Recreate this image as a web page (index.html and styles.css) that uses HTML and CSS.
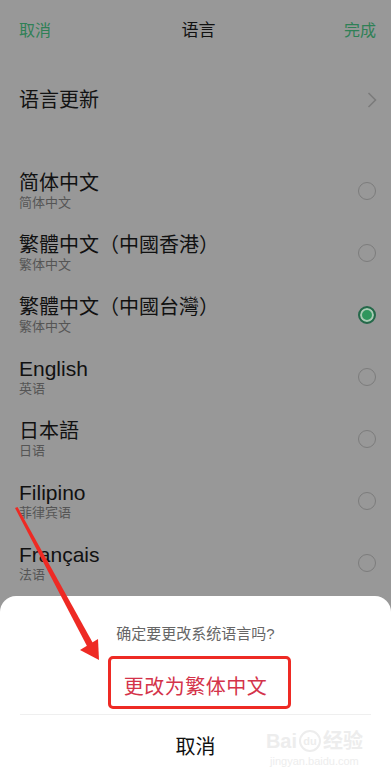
FILE: index.html
```html
<!DOCTYPE html>
<html lang="zh-CN">
<head>
<meta charset="utf-8">
<title>语言</title>
<link rel="stylesheet" href="styles.css">
</head>
<body>
<div class="screen">
  <header class="topbar">
    <span class="link">取消</span>
    <span class="title">语言</span>
    <span class="link">完成</span>
  </header>
  <div class="update-row">
    <span class="update-label">语言更新</span>
    <svg class="chev" width="10" height="16" viewBox="0 0 10 16"><polyline points="1.5,1 8.5,8 1.5,15" fill="none" stroke="#7a7a7a" stroke-width="1.5"/></svg>
  </div>
  <ul class="langs">
    <li class="lang"><div class="names"><span class="main">简体中文</span><span class="sub">简体中文</span></div><span class="radio"></span></li>
    <li class="lang"><div class="names"><span class="main">繁體中文（中國香港）</span><span class="sub">繁体中文</span></div><span class="radio"></span></li>
    <li class="lang"><div class="names"><span class="main">繁體中文（中國台灣）</span><span class="sub">繁体中文</span></div><span class="radio on"></span></li>
    <li class="lang"><div class="names"><span class="main latin">English</span><span class="sub">英语</span></div><span class="radio"></span></li>
    <li class="lang"><div class="names"><span class="main">日本語</span><span class="sub">日语</span></div><span class="radio"></span></li>
    <li class="lang"><div class="names"><span class="main latin">Filipino</span><span class="sub">菲律宾语</span></div><span class="radio"></span></li>
    <li class="lang"><div class="names"><span class="main latin">Français</span><span class="sub">法语</span></div><span class="radio"></span></li>
  </ul>

  <div class="sheet">
    <div class="sheet-title">确定要更改系统语言吗?</div>
    <div class="sheet-confirm"><span class="confirm-text">更改为繁体中文</span><span class="mark-box"></span></div>
    <div class="sheet-divider"></div>
    <div class="sheet-cancel">取消</div>
    <div class="watermark">
      <div class="wm-logo"><span>Bai</span><span class="wm-paw">du</span><span>经验</span></div>
      <div class="wm-url">jingyan.baidu.com</div>
    </div>
  </div>

  <svg class="arrow" width="391" height="778" viewBox="0 0 391 778">
    <polygon points="15,508 17.5,507 94,645 88,648" fill="#ee2a24"/>
    <polygon points="99,660 80,650 98,639" fill="#ee2a24"/>
  </svg>
</div>
</body>
</html>
```
FILE: styles.css
```css
* { box-sizing: border-box; margin: 0; padding: 0; }
html, body { width: 391px; height: 778px; overflow: hidden; }
body {
  background: #989898;
  font-family: "Liberation Sans", "Noto Sans CJK SC", sans-serif;
  color: #121212;
}
.screen { position: relative; width: 391px; height: 778px; }

.topbar {
  height: 62px;
  display: flex;
  align-items: center;
  justify-content: space-between;
  padding: 0 15px 0 19px;
}
.link { font-size: 16px; color: #2f8056; line-height: 20px; }
.title { font-size: 17px; color: #111; line-height: 20px; margin-left: 2px; }

.update-row {
  height: 76px;
  display: flex;
  align-items: center;
  justify-content: space-between;
  padding: 0 14px 0 19px;
}
.update-label { font-size: 20px; line-height: 24px; }
.chev { display: block; }

.langs { list-style: none; margin-top: 22px; }
.lang {
  height: 62px;
  display: flex;
  align-items: center;
  justify-content: space-between;
  padding: 0 15px 0 19px;
}
.names { display: flex; flex-direction: column; }
.main { font-size: 20px; line-height: 24px; color: #111; }
.main.latin { font-size: 21px; }
.sub { font-size: 13px; line-height: 16px; color: #555; }
.radio {
  width: 18px;
  height: 18px;
  border-radius: 50%;
  border: 1.5px solid #7c7c7c;
}
.radio.on {
  border: 2px solid #25684a;
  background: #2e965d;
  box-shadow: inset 0 0 0 2px #a9c9b4;
}

.sheet {
  position: absolute;
  left: 0;
  right: 0;
  bottom: 0;
  height: 182px;
  background: #fff;
  border-radius: 16px 16px 0 0;
  display: flex;
  flex-direction: column;
}
.sheet-title {
  padding-top: 28px;
  line-height: 20px;
  font-size: 15px;
  color: #666;
  text-align: center;
}
.sheet-confirm {
  position: relative;
  height: 70px;
  display: flex;
  justify-content: center;
  padding-top: 31px;
}
.confirm-text {
  font-size: 20px;
  line-height: 24px;
  color: #d4334a;
  letter-spacing: 0.5px;
}
.mark-box {
  position: absolute;
  left: 108px;
  top: 12px;
  width: 183px;
  height: 53px;
  border: 3px solid #ee2a24;
  border-radius: 5px;
}
.sheet-divider { height: 1px; background: #efefef; margin: 0 20px; }
.sheet-cancel {
  flex: 1;
  display: flex;
  align-items: center;
  justify-content: center;
  font-size: 20px;
  color: #111;
  padding-bottom: 2px;
}

.watermark {
  position: absolute;
  right: 28px;
  bottom: 10px;
  color: #ededed;
  text-align: center;
}
.wm-logo { display: flex; align-items: center; gap: 2px; font-size: 20px; font-weight: bold; line-height: 22px; }
.wm-paw {
  font-size: 11px;
  border: 2px solid #ededed;
  border-radius: 50%;
  width: 22px;
  height: 22px;
  line-height: 18px;
}
.wm-url { font-size: 11px; line-height: 14px; margin-top: 2px; }

.arrow { position: absolute; left: 0; top: 0; pointer-events: none; }
```
